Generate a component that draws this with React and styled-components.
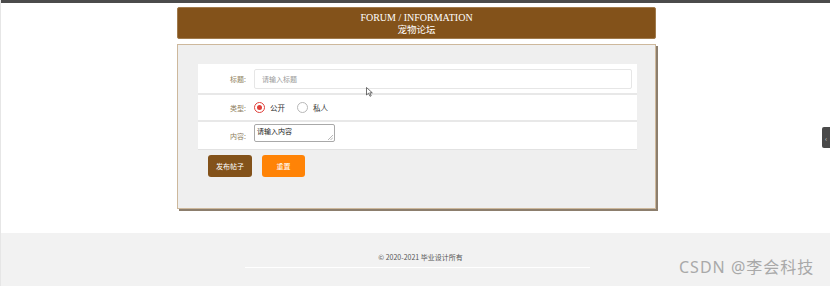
import React from "react";
import styled, { createGlobalStyle } from "styled-components";

const Global = createGlobalStyle`
  html, body { margin: 0; padding: 0; background: #fff; }
  body { font-family: "Noto Sans CJK SC", "Noto Sans", sans-serif; width: 830px; height: 286px; overflow: hidden; position: relative; }
  * { box-sizing: border-box; }
`;

const Page = styled.div`
  position: relative;
  width: 830px;
  height: 286px;
  border-left: 1px solid #e6e6e6;
`;

const TopBar = styled.div`
  height: 3px;
  background: #4b4b4b;
`;

const Main = styled.div`
  width: 479px;
  margin: 4px 0 0 176px;
`;

const Header = styled.div`
  height: 32px;
  background: #83521a;
  border: 1px solid #a07a4c;
  border-radius: 2px;
  color: #fff;
  text-align: center;
  font-family: "Liberation Serif", "Noto Sans CJK SC", serif;
  font-size: 10px;
  line-height: 11px;
  padding-top: 4px;
`;

const Cn = styled.div`
  font-family: "Noto Sans CJK SC", serif;
  font-size: 9.5px;
  line-height: 12px;
`;

const Panel = styled.div`
  margin-top: 5px;
  height: 165px;
  background: #efefef;
  border: 1px solid #cdb89c;
  box-shadow: 2px 2px 0 #8c7e6d;
  padding: 19px 19px 0 20px;
`;

const Form = styled.div`
  width: 439px;
  background: #fff;
  border-bottom: 1px solid #e2e2e2;
`;

const Row = styled.div`
  display: flex;
  align-items: center;
  height: ${(p) => p.h}px;
  border-top: ${(p) => (p.first ? "none" : "2px solid #e8e8e8")};
`;

const Label = styled.div`
  width: 48px;
  text-align: right;
  font-size: 7px;
  color: #8f7f5f;
  margin-right: 8px;
`;

const Input = styled.div`
  width: 378px;
  height: 20px;
  border: 1px solid #e6e6e6;
  border-radius: 2px;
  font-size: 7px;
  color: #9a9a9a;
  padding-left: 7px;
  display: flex;
  align-items: center;
`;

const RadioWrap = styled.div`
  display: flex;
  align-items: center;
  margin-right: 12px;
  font-size: 7.5px;
  color: #333;
`;

const Radio = styled.span`
  width: 11px;
  height: 11px;
  border-radius: 50%;
  border: 1px solid ${(p) => (p.on ? "#e0403a" : "#b8b8b8")};
  display: inline-flex;
  align-items: center;
  justify-content: center;
  margin-right: 5px;
  &::after {
    content: "";
    width: 5px;
    height: 5px;
    border-radius: 50%;
    background: ${(p) => (p.on ? "#e0403a" : "transparent")};
  }
`;

const TextArea = styled.div`
  width: 81px;
  height: 18px;
  border: 1px solid #a9a9a9;
  border-radius: 2px;
  font-size: 7px;
  color: #222;
  padding: 1px 2px;
  margin-top: -5px;
  position: relative;
`;

const Grip = styled.svg`
  position: absolute;
  right: 1px;
  bottom: 1px;
`;

const Buttons = styled.div`
  display: flex;
  gap: 10px;
  margin: 5px 0 0 10px;
`;

const Btn = styled.div`
  width: ${(p) => p.w}px;
  height: 22px;
  border-radius: 3px;
  background: ${(p) => p.bg};
  color: #fff;
  font-size: 7px;
  display: flex;
  align-items: center;
  justify-content: center;
`;

const Footer = styled.div`
  margin-top: 24px;
  height: 53px;
  background: #f2f2f2;
  display: flex;
  flex-direction: column;
  align-items: center;
  padding-top: 19px;
`;

const FootText = styled.div`
  font-size: 7px;
  color: #555;
  margin-left: 10px;
`;

const FootLine = styled.div`
  width: 345px;
  height: 1px;
  background: #fff;
  margin-top: 5px;
  margin-left: 4px;
`;

const SideTab = styled.div`
  position: absolute;
  right: 0;
  top: 127px;
  width: 8px;
  height: 21px;
  background: #4a4a4a;
  border-radius: 2px 0 0 2px;
  color: #ccc;
  font-size: 7px;
  display: flex;
  align-items: center;
  justify-content: center;
`;

const Watermark = styled.div`
  position: absolute;
  left: 678px;
  top: 257px;
  font-family: "Noto Sans", "Noto Sans CJK SC", sans-serif;
  font-size: 16px;
  line-height: 20px;
  letter-spacing: 1px;
  color: #a9a9a9;
  white-space: nowrap;
`;

const Cursor = styled.svg`
  position: absolute;
  left: 365px;
  top: 87px;
`;

export default function App() {
  return (
    <Page>
      <Global />
      <TopBar />
      <Main>
        <Header>
          FORUM / INFORMATION
          <Cn>宠物论坛</Cn>
        </Header>
        <Panel>
          <Form>
            <Row first h={29}>
              <Label>标题:</Label>
              <Input>请输入标题</Input>
            </Row>
            <Row h={27}>
              <Label>类型:</Label>
              <RadioWrap>
                <Radio on />
                公开
              </RadioWrap>
              <RadioWrap>
                <Radio />
                私人
              </RadioWrap>
            </Row>
            <Row h={29}>
              <Label>内容:</Label>
              <TextArea>
                请输入内容
                <Grip width="5" height="5" viewBox="0 0 5 5">
                  <path d="M5 0L0 5M5 2.5L2.5 5" stroke="#999" strokeWidth="0.7" />
                </Grip>
              </TextArea>
            </Row>
          </Form>
          <Buttons>
            <Btn w={44} bg="#83521a">发布帖子</Btn>
            <Btn w={43} bg="#ff8306">重置</Btn>
          </Buttons>
        </Panel>
      </Main>
      <Footer>
        <FootText>© 2020-2021 毕业设计所有</FootText>
        <FootLine />
      </Footer>
      <SideTab>‹</SideTab>
      <Cursor width="7" height="10" viewBox="0 0 7 10">
        <path d="M0.5 0.5L0.5 8L2.5 6.2L4 9.3L5.2 8.7L3.8 5.8L6.3 5.8Z" fill="#fff" stroke="#333" strokeWidth="0.7" />
      </Cursor>
      <Watermark>CSDN @李会科技</Watermark>
    </Page>
  );
}
